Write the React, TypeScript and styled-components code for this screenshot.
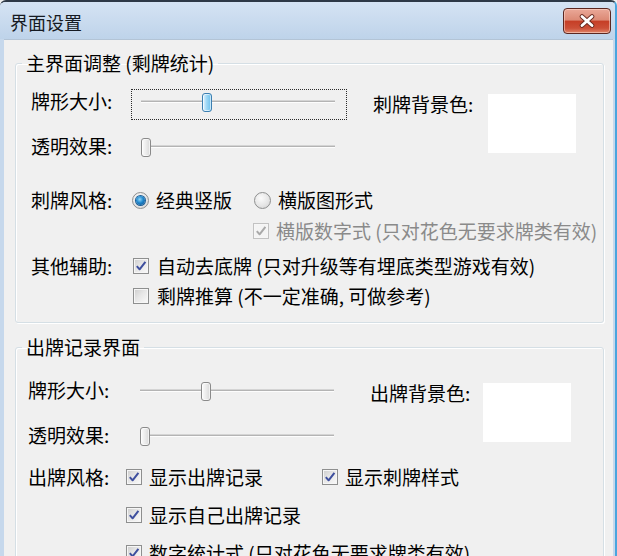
import React from "react";
import styled, { createGlobalStyle } from "styled-components";

const GlobalStyle = createGlobalStyle`
  html, body {
    margin: 0;
    padding: 0;
    background: #f0f0f0;
  }
  body {
    font-family: "Noto Sans CJK SC", "Noto Sans", sans-serif;
    color: #000;
  }
`;

const Window = styled.div`
  width: 617px;
  height: 556px;
  box-sizing: border-box;
  overflow: hidden;
  display: flex;
  flex-direction: column;
  background: #c6d8ec;
  border-top: 2px solid #2e3946;
  border-right: 2px solid #4aa5de;
  border-radius: 6px 6px 0 0;
`;

const TitleBar = styled.div`
  height: 37px;
  flex-shrink: 0;
  display: flex;
  align-items: center;
  justify-content: space-between;
  padding: 0 4px 0 10px;
  background: linear-gradient(#d5e3f3, #bed3ea);
`;

const Title = styled.div`
  font-size: 18px;
  line-height: 24px;
  color: #151a22;
  padding-top: 2px;
`;

const CloseButton = styled.button`
  width: 48px;
  height: 26px;
  box-sizing: border-box;
  padding: 0;
  display: flex;
  align-items: center;
  justify-content: center;
  border: 1px solid #5b2721;
  border-radius: 4px;
  background: linear-gradient(
    #eaa898 0%,
    #dc8a76 45%,
    #c63f27 52%,
    #cc5038 80%,
    #e0856a 100%
  );
  box-shadow: inset 0 0 0 1px rgba(255, 220, 210, 0.55);
`;

const Frame = styled.div`
  flex: 1;
  min-height: 0;
  display: flex;
  padding: 0 2px 0 4px;
`;

const Client = styled.div`
  flex: 1;
  min-height: 0;
  overflow: hidden;
  background: #f0f0f0;
  border-top: 1px solid #b3c4d6;
  padding: 11px 9px 0 11px;
`;

const Group = styled.fieldset`
  margin: 0 0 12px;
  min-width: 0;
  padding: 0 0 14px;
  border: 1px solid #d5dfe5;
  border-radius: 3px;
  box-shadow: inset 1px 1px 0 #fff, 1px 1px 0 #fff;
`;

const Legend = styled.legend`
  margin-left: 6px;
  padding: 0 4px;
  font-size: 19px;
  line-height: 24px;
`;

const GroupBody = styled.div<{ $padTop: number; $padLeft: number }>`
  padding: ${(p) => p.$padTop}px 0 0 ${(p) => p.$padLeft}px;
`;

const TopBlock = styled.div`
  display: flex;
  align-items: flex-start;
`;

const SliderColumn = styled.div`
  display: flex;
  flex-direction: column;
  gap: 14px;
`;

const Row = styled.div<{ $mt?: number }>`
  display: flex;
  align-items: flex-start;
  margin-top: ${(p) => p.$mt ?? 0}px;
`;

const Label = styled.div<{ $w: number }>`
  width: ${(p) => p.$w}px;
  flex-shrink: 0;
  font-size: 19px;
  line-height: 24px;
  white-space: nowrap;
`;

const ColorLabel = styled.div<{ $ml: number; $w: number }>`
  margin: 3px 0 0 ${(p) => p.$ml}px;
  width: ${(p) => p.$w}px;
  flex-shrink: 0;
  font-size: 19px;
  line-height: 24px;
  white-space: nowrap;
`;

const ColorBox = styled.div`
  width: 88px;
  height: 59px;
  margin-top: 5px;
  background: #fff;
`;

const SliderBox = styled.div<{ $focused?: boolean }>`
  position: relative;
  width: 216px;
  height: 31px;
  box-sizing: border-box;
  padding: 10px 11px 0 9px;
  border: 1px ${(p) => (p.$focused ? "dotted #2a2a2a" : "solid transparent")};
`;

const Track = styled.div`
  height: 1px;
  background: #b4b4b4;
  border-top: 1px solid #d4d4d4;
  border-bottom: 1px solid #fdfdfd;
`;

const Thumb = styled.div<{ $focused?: boolean }>`
  position: absolute;
  top: 3px;
  width: 10px;
  height: 19px;
  box-sizing: border-box;
  border-radius: 3px;
  border: 1px solid ${(p) => (p.$focused ? "#3c7fb1" : "#8a8a8a")};
  background: ${(p) =>
    p.$focused
      ? "linear-gradient(90deg, #e3f4fd 0%, #9fd8f6 45%, #6cc0ec 100%)"
      : "linear-gradient(90deg, #fcfcfc 0%, #ececec 50%, #d9d9d9 100%)"};
  box-shadow: inset 0 0 0 1px rgba(255, 255, 255, 0.6);
`;

const Options = styled.div<{ $gap: number }>`
  display: flex;
  flex-direction: column;
  gap: ${(p) => p.$gap}px;
`;

const InlineOptions = styled.div`
  display: flex;
  gap: 22px;
`;

const Indent = styled.div<{ $ml: number }>`
  margin-left: ${(p) => p.$ml}px;
`;

const OptionGrid = styled.div`
  display: grid;
  grid-template-columns: 196px auto;
  row-gap: 14px;
`;

const Option = styled.div<{ $disabled?: boolean; $gap?: number }>`
  display: inline-flex;
  align-items: center;
  gap: ${(p) => p.$gap ?? 7}px;
  font-size: 19px;
  line-height: 24px;
  white-space: nowrap;
  color: ${(p) => (p.$disabled ? "#8a8a8a" : "#000")};
`;

const Box = styled.span<{ $disabled?: boolean }>`
  width: 16px;
  height: 16px;
  box-sizing: border-box;
  flex-shrink: 0;
  display: flex;
  align-items: center;
  justify-content: center;
  border: 1px solid ${(p) => (p.$disabled ? "#c2c2c2" : "#8e8f8f")};
  background: ${(p) =>
    p.$disabled
      ? "#f4f4f4"
      : "linear-gradient(135deg, #cdcdcd 0%, #e6e6e6 45%, #fafafa 100%)"};
  box-shadow: inset 0 0 0 1px #f6f6f6;
`;

const Circle = styled.span`
  width: 17px;
  height: 17px;
  box-sizing: border-box;
  flex-shrink: 0;
  border-radius: 50%;
  display: flex;
  align-items: center;
  justify-content: center;
  border: 1px solid #8e8f8f;
  background: radial-gradient(circle at 40% 35%, #fbfbfb 0%, #e6e6e6 55%, #cfcfcf 100%);
`;

const Dot = styled.span`
  width: 9px;
  height: 9px;
  border-radius: 50%;
  background: radial-gradient(circle at 42% 38%, #8fd6f8 0%, #1f86cc 45%, #0a4a86 100%);
  box-shadow: 0 0 0 1px #1c5f97;
`;

const CheckMark = ({ color }: { color: string }) => (
  <svg width="12" height="12" viewBox="0 0 12 12">
    <path
      d="M1.8 6.2 L4.6 9.3 L10.4 1.8"
      fill="none"
      stroke={color}
      strokeWidth="2"
      strokeLinejoin="round"
    />
  </svg>
);

const Check = ({
  checked,
  disabled,
  gap,
  children,
}: {
  checked?: boolean;
  disabled?: boolean;
  gap?: number;
  children: React.ReactNode;
}) => (
  <Option $disabled={disabled} $gap={gap}>
    <Box $disabled={disabled}>
      {checked && <CheckMark color={disabled ? "#a9a9a9" : "#3e4f9e"} />}
    </Box>
    {children}
  </Option>
);

const Radio = ({ checked, children }: { checked?: boolean; children: React.ReactNode }) => (
  <Option>
    <Circle>{checked && <Dot />}</Circle>
    {children}
  </Option>
);

const Slider = ({ value, focused }: { value: number; focused?: boolean }) => (
  <SliderBox $focused={focused}>
    <Track />
    <Thumb $focused={focused} style={{ left: 9 + Math.round((value / 100) * 185) }} />
  </SliderBox>
);

const CloseIcon = () => (
  <svg width="18" height="14" viewBox="0 0 18 14">
    <path d="M4 2.5 L14 11.5 M14 2.5 L4 11.5" stroke="#6a2c22" strokeWidth="4.6" strokeLinecap="round" />
    <path d="M4 2.5 L14 11.5 M14 2.5 L4 11.5" stroke="#ffffff" strokeWidth="2.8" strokeLinecap="round" />
  </svg>
);

export default function App() {
  return (
    <>
      <GlobalStyle />
      <Window>
        <TitleBar>
          <Title>界面设置</Title>
          <CloseButton aria-label="关闭">
            <CloseIcon />
          </CloseButton>
        </TitleBar>
        <Frame>
          <Client>
            <Group>
              <Legend>主界面调整 (剩牌统计)</Legend>
              <GroupBody $padTop={14} $padLeft={15}>
                <TopBlock>
                  <SliderColumn>
                    <Row>
                      <Label $w={100}>牌形大小:</Label>
                      <Slider value={33} focused />
                    </Row>
                    <Row>
                      <Label $w={100}>透明效果:</Label>
                      <Slider value={0} />
                    </Row>
                  </SliderColumn>
                  <ColorLabel $ml={26} $w={115}>
                    刺牌背景色:
                  </ColorLabel>
                  <ColorBox />
                </TopBlock>
                <Row $mt={23}>
                  <Label $w={101}>刺牌风格:</Label>
                  <Options $gap={6}>
                    <InlineOptions>
                      <Radio checked>经典竖版</Radio>
                      <Radio>横版图形式</Radio>
                    </InlineOptions>
                    <Indent $ml={121}>
                      <Check checked disabled>
                        横版数字式 (只对花色无要求牌类有效)
                      </Check>
                    </Indent>
                  </Options>
                </Row>
                <Row $mt={11}>
                  <Label $w={102}>其他辅助:</Label>
                  <Options $gap={6}>
                    <Check checked gap={8}>
                      自动去底牌 (只对升级等有埋底类型游戏有效)
                    </Check>
                    <Check gap={8}>剩牌推算 (不一定准确, 可做参考)</Check>
                  </Options>
                </Row>
              </GroupBody>
            </Group>
            <Group>
              <Legend>出牌记录界面</Legend>
              <GroupBody $padTop={19} $padLeft={12}>
                <TopBlock>
                  <SliderColumn>
                    <Row>
                      <Label $w={102}>牌形大小:</Label>
                      <Slider value={33} />
                    </Row>
                    <Row>
                      <Label $w={102}>透明效果:</Label>
                      <Slider value={0} />
                    </Row>
                  </SliderColumn>
                  <ColorLabel $ml={24} $w={113}>
                    出牌背景色:
                  </ColorLabel>
                  <ColorBox />
                </TopBlock>
                <Row $mt={11}>
                  <Label $w={98}>出牌风格:</Label>
                  <OptionGrid>
                    <Check checked>显示出牌记录</Check>
                    <Check checked>显示刺牌样式</Check>
                    <Check checked>显示自己出牌记录</Check>
                    <span />
                    <Check checked>数字统计式 (只对花色无要求牌类有效)</Check>
                  </OptionGrid>
                </Row>
              </GroupBody>
            </Group>
          </Client>
        </Frame>
      </Window>
    </>
  );
}
